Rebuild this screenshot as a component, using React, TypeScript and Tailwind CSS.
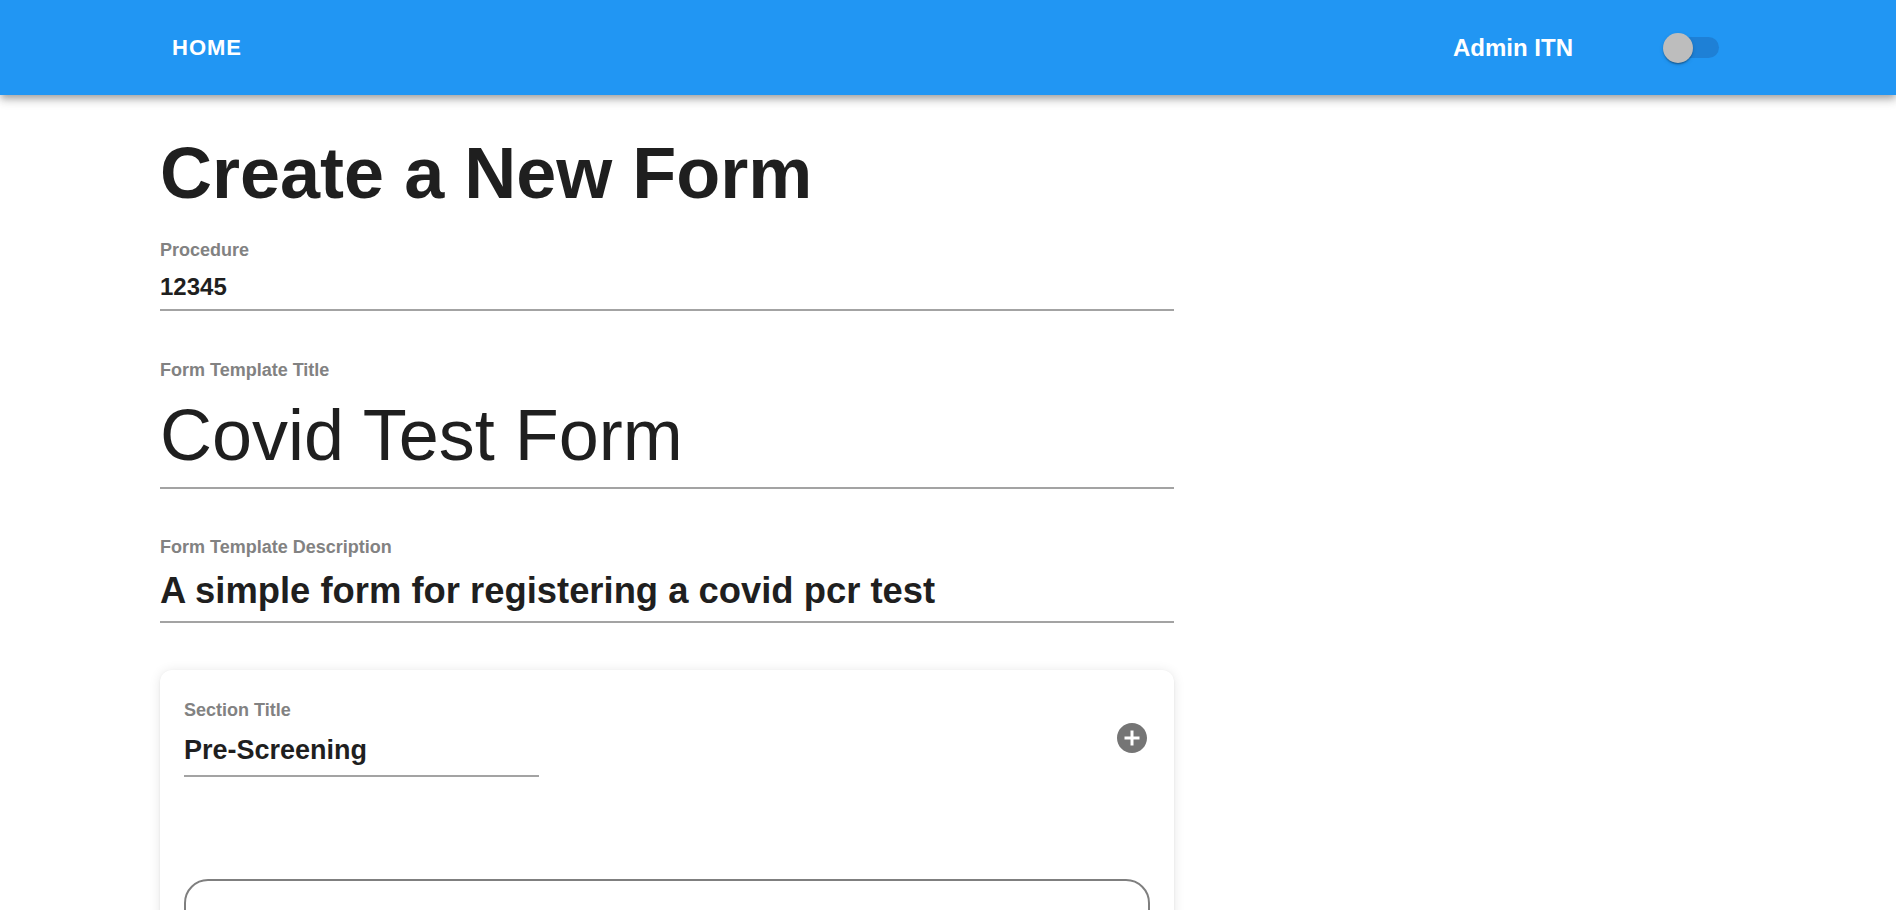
import React from "react";

function AddCircleIcon() {
  return (
    <svg viewBox="0 0 24 24" className="size-[36px] fill-[#757575]">
      <path d="M12 2C6.48 2 2 6.48 2 12s4.48 10 10 10 10-4.48 10-10S17.52 2 12 2zm5 11h-4v4h-2v-4H7v-2h4V7h2v4h4v2z" />
    </svg>
  );
}

function Field({
  label,
  value,
  valueClass,
  gap,
  lineGap,
}: {
  label: string;
  value: string;
  valueClass: string;
  gap: string;
  lineGap: string;
}) {
  return (
    <div className="flex flex-col">
      <label className="text-[18px] leading-[18px] font-bold text-[#828282]">{label}</label>
      <div className={`${gap} text-[#1f1f1f] whitespace-nowrap ${valueClass}`}>{value}</div>
      <div className={`${lineGap} h-[2px] bg-[#a3a3a3]`} />
    </div>
  );
}

export default function App() {
  return (
    <div className="min-h-screen bg-white font-['Liberation_Sans',Arial,sans-serif] overflow-hidden">
      <header className="relative z-10 h-[95px] bg-[#2196f3] flex items-center justify-between pl-[160px] pr-[177px] shadow-[0_3px_6px_-1.5px_rgba(0,0,0,0.2),0_6px_7.5px_0_rgba(0,0,0,0.14),0_1.5px_15px_0_rgba(0,0,0,0.12)]">
        <button className="px-3 text-[22px] leading-[24px] font-bold uppercase text-white tracking-[1px]">Home</button>
        <div className="flex items-center">
          <span className="text-[24px] leading-[24px] font-bold text-white">Admin ITN</span>
          <div className="relative ml-[90px] w-[56px] h-[30px]">
            <div className="absolute left-[5px] top-[4.5px] w-[51px] h-[21px] rounded-full bg-[#1e80d6]" />
            <div className="absolute left-0 top-0 size-[30px] rounded-full bg-[#bdbdbd] shadow-[0_2px_1.5px_-1px_rgba(0,0,0,0.2),0_1.5px_1.5px_0_rgba(0,0,0,0.14),0_1.5px_4.5px_0_rgba(0,0,0,0.12)]" />
          </div>
        </div>
      </header>

      <main className="pl-[160px] w-[1174px]">
        <h1 className="mt-[42px] text-[72px] leading-[72px] font-bold text-[#1f1f1f] whitespace-nowrap">Create a New Form</h1>

        <div className="mt-[32px]">
          <Field label="Procedure" value="12345" valueClass="text-[24px] leading-[24px] font-bold" gap="mt-[16px]" lineGap="mt-[10px]" />
        </div>

        <div className="mt-[50px]">
          <Field label="Form Template Title" value="Covid Test Form" valueClass="text-[72px] leading-[72px] font-normal" gap="mt-[20px]" lineGap="mt-[16px]" />
        </div>

        <div className="mt-[49px]">
          <Field
            label="Form Template Description"
            value="A simple form for registering a covid pcr test"
            valueClass="text-[36.4px] leading-[36px] font-bold"
            gap="mt-[16.5px]"
            lineGap="mt-[12.5px]"
          />
        </div>

        <section className="mt-[47px] w-[1014px] rounded-xl bg-white px-[24px] pt-[31px] pb-[40px] shadow-[0_1.5px_3px_-1px_rgba(0,0,0,0.15),0_1px_12px_0_rgba(0,0,0,0.1)]">
          <div className="flex items-center justify-between">
            <div className="w-[355px]">
              <Field label="Section Title" value="Pre-Screening" valueClass="text-[27px] leading-[27px] font-bold" gap="mt-[17.5px]" lineGap="mt-[11px]" />
            </div>
            <button className="mr-[0px] mt-[-2px]">
              <AddCircleIcon />
            </button>
          </div>
          <div className="mt-[102px] h-[220px] rounded-[24px] border-2 border-[#7f7f7f]" />
        </section>
      </main>
    </div>
  );
}
